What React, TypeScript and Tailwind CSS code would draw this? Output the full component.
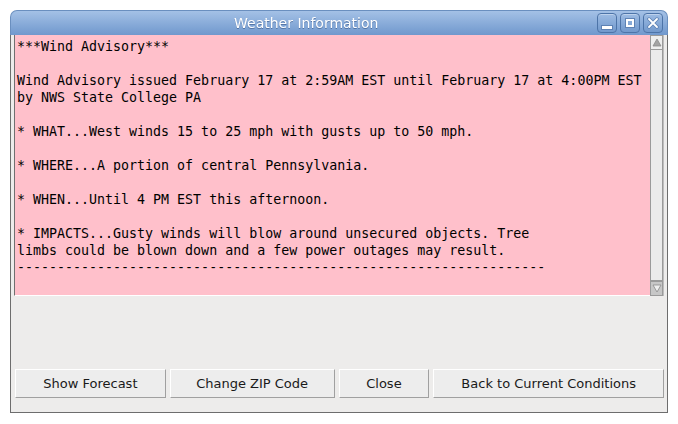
import React from "react";

const lines = [
  "***Wind Advisory***",
  "",
  "Wind Advisory issued February 17 at 2:59AM EST until February 17 at 4:00PM EST",
  "by NWS State College PA",
  "",
  "* WHAT...West winds 15 to 25 mph with gusts up to 50 mph.",
  "",
  "* WHERE...A portion of central Pennsylvania.",
  "",
  "* WHEN...Until 4 PM EST this afternoon.",
  "",
  "* IMPACTS...Gusty winds will blow around unsecured objects. Tree",
  "limbs could be blown down and a few power outages may result.",
  "------------------------------------------------------------------",
];

const TitleButton = ({ children }: { children: React.ReactNode }) => (
  <div className="w-[20px] h-[20px] rounded-[4px] border border-[#4d74a8] bg-gradient-to-b from-[#9cbbe3] to-[#7299cc] flex items-center justify-center shadow-[inset_0_1px_0_rgba(255,255,255,0.35)]">
    {children}
  </div>
);

const Btn = ({ label, w }: { label: string; w: string }) => (
  <button
    className={`${w} h-[29px] bg-[#ededed] border border-t-white border-l-white border-r-[#a0a0a0] border-b-[#a0a0a0] text-[13px] text-[#1a1a1a] font-['DejaVu_Sans',sans-serif]`}
  >
    {label}
  </button>
);

export default function App() {
  return (
    <div className="w-[678px] h-[424px] bg-white relative">
      <div className="absolute left-[10px] top-[10px] w-[658px] h-[403px] flex flex-col">
        {/* title bar */}
        <div className="h-[25px] rounded-t-[7px] bg-gradient-to-b from-[#a4c1e6] to-[#7098cd] border border-[#6a8fbf] border-b-0 relative flex items-center pl-[223px]">
          <span className="text-white text-[14px] font-['DejaVu_Sans',sans-serif] drop-shadow-[0_1px_0_rgba(40,70,120,0.5)]">
            Weather Information
          </span>
          <div className="absolute right-[4px] top-[2px] flex gap-[3px]">
            <TitleButton>
              <div className="w-[10px] h-[3px] bg-white mt-[8px] border border-[#5e82b4] box-content" />
            </TitleButton>
            <TitleButton>
              <div className="w-[8px] h-[8px] border-2 border-white outline outline-1 outline-[#5e82b4]" />
            </TitleButton>
            <TitleButton>
              <svg width="12" height="12" viewBox="0 0 12 12">
                <path d="M2 2 L10 10 M10 2 L2 10" stroke="#5e82b4" strokeWidth="3.5" strokeLinecap="round" />
                <path d="M2 2 L10 10 M10 2 L2 10" stroke="white" strokeWidth="1.8" strokeLinecap="round" />
              </svg>
            </TitleButton>
          </div>
        </div>
        {/* body */}
        <div className="flex-1 bg-[#edeceb] border border-[#6d6d6d] border-t-0 flex flex-col pl-[3px] pr-[3px]">
          <div className="flex h-[261px]">
            <div className="flex-1 bg-[#ffc0cb] border-l border-[#707070] border-b border-b-white pl-[2px] pt-[3px] font-['DejaVu_Sans_Mono',monospace] text-[13.3px] leading-[17px] text-black whitespace-pre overflow-hidden">
              {lines.map((l, i) => (
                <div key={i} className="h-[17px]">{l}</div>
              ))}
            </div>
            {/* scrollbar */}
            <div className="w-[14px] bg-[#e3e3e3] flex flex-col border-r border-[#bdbdbd]">
              <div className="h-[15px] bg-[#eeeeee] border border-[#9a9a9a] flex items-center justify-center">
                <svg width="10" height="9" viewBox="0 0 10 9">
                  <path d="M5 1 L9 8 L1 8 Z" fill="#a3a3a3" stroke="#8a8a8a" strokeWidth="0.8" />
                </svg>
              </div>
              <div className="flex-1 bg-[#ebebeb] border border-[#9a9a9a] border-t-0" />
              <div className="h-[15px] bg-[#c7c7c7] border border-[#9a9a9a] flex items-center justify-center">
                <svg width="10" height="9" viewBox="0 0 10 9">
                  <path d="M1 1 L9 1 L5 8 Z" fill="#eeeeee" stroke="#8a8a8a" strokeWidth="0.8" />
                </svg>
              </div>
            </div>
          </div>
          <div className="flex-1" />
          <div className="flex gap-[4px] pl-[1px] mb-[14px]">
            <Btn label="Show Forecast" w="w-[151px]" />
            <Btn label="Change ZIP Code" w="w-[165px]" />
            <Btn label="Close" w="w-[91px]" />
            <Btn label="Back to Current Conditions" w="w-[231px]" />
          </div>
        </div>
      </div>
    </div>
  );
}
